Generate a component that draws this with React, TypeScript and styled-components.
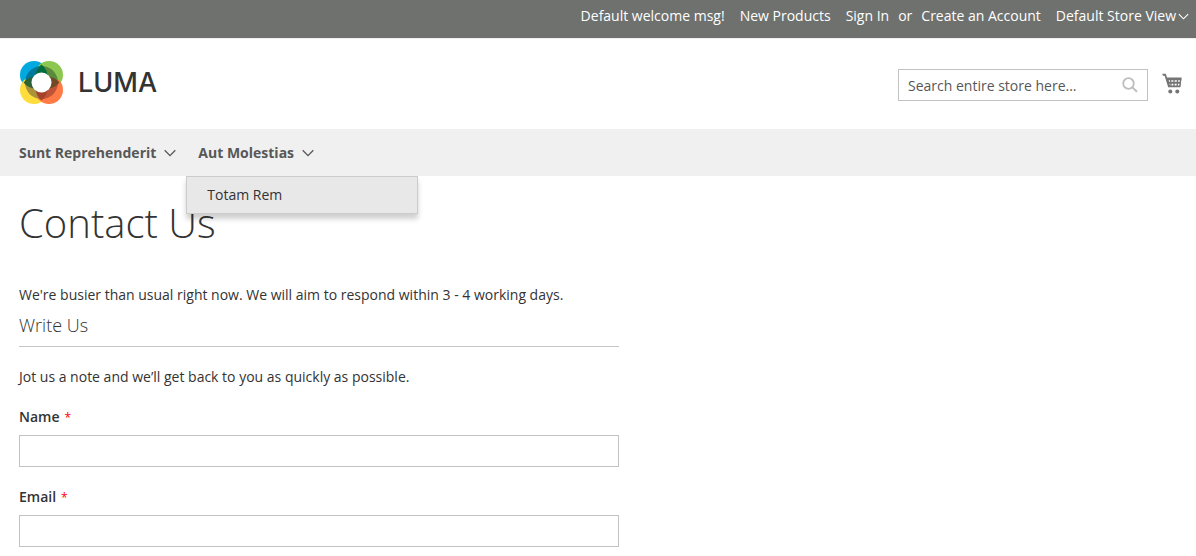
import React from "react";
import styled, { createGlobalStyle } from "styled-components";

const GlobalStyle = createGlobalStyle`
  *, *::before, *::after { box-sizing: border-box; }
  body {
    margin: 0;
    background: #fff;
    color: #333;
    font: 400 14px/20px "Open Sans", "Noto Sans", sans-serif;
  }
`;

const Panel = styled.div`
  display: flex;
  justify-content: flex-end;
  gap: 15px;
  padding: 6px 7px 12px 19px;
  background: #6e716e;
  border-bottom: 1px solid #efefef;
  color: #fff;
`;

const PanelLink = styled.a`
  color: #fff;
  text-decoration: none;
`;

const Authorization = styled.div`
  display: flex;
  gap: 9px;
`;

const StoreSwitcher = styled.button`
  display: flex;
  align-items: center;
  gap: 2px;
  padding: 0;
  border: 0;
  background: none;
  color: inherit;
  font: inherit;
`;

const Header = styled.header`
  display: flex;
  align-items: center;
  justify-content: space-between;
  padding: 22px 14px 24px 19px;
`;

const Logo = styled.a`
  display: flex;
  align-items: center;
  gap: 14px;
  color: #333;
  font: 500 27px/44px Inter, sans-serif;
  text-decoration: none;
`;

const Tools = styled.div`
  display: flex;
  align-items: center;
  gap: 14px;
  padding-top: 4px;
`;

const SearchForm = styled.form`
  display: flex;
  align-items: center;
  width: 250px;
  height: 32px;
  padding-right: 9px;
  border: 1px solid #c2c2c2;
`;

const SearchInput = styled.input`
  flex: 1;
  min-width: 0;
  height: 30px;
  padding: 0 9px;
  border: 0;
  outline: 0;
  background: none;
  font: inherit;
  &::placeholder { color: #575757; opacity: 1; }
`;

const IconButton = styled.button`
  display: flex;
  padding: 0;
  border: 0;
  background: none;
`;

const Cart = styled.a`
  display: flex;
`;

const Nav = styled.nav`
  background: #f0f0f0;
`;

const Menu = styled.ul`
  display: flex;
  gap: 22px;
  margin: 0;
  padding: 0 19px;
  list-style: none;
`;

const MenuItem = styled.li`
  position: relative;
`;

const MenuLink = styled.a`
  display: flex;
  align-items: center;
  gap: 8px;
  height: 47px;
  color: #575757;
  font-weight: 700;
  text-decoration: none;
`;

const Submenu = styled.ul`
  position: absolute;
  top: 100%;
  left: -12px;
  z-index: 1;
  width: 232px;
  margin: 0;
  padding: 0;
  border: 1px solid #ccc;
  background: #e8e8e8;
  box-shadow: 0 5px 5px rgba(0, 0, 0, 0.19);
  list-style: none;
`;

const SubmenuLink = styled.a`
  display: block;
  padding: 8px 20px;
  color: #333;
  text-decoration: none;
`;

const Main = styled.main`
  padding: 25px 19px 8px;
`;

const Title = styled.h1`
  margin: 0 0 40px;
  font-size: 40px;
  font-weight: 300;
  line-height: 44px;
`;

const Text = styled.p`
  margin: 0 0 20px;
`;

const ContactForm = styled.form`
  max-width: 600px;
`;

const Notice = styled(Text)`
  margin-bottom: 10px;
`;

const FormTitle = styled.h2`
  margin: 0 0 20px;
  padding-bottom: 11px;
  border-bottom: 1px solid #c5c5c5;
  font-size: 18px;
  font-weight: 300;
  line-height: 20px;
`;

const Field = styled.div`
  display: flex;
  flex-direction: column;
  gap: 8px;
  & + & { margin-top: 20px; }
`;

const Label = styled.label`
  font-weight: 600;
`;

const Required = styled.span`
  margin-left: 5px;
  color: #f00;
  font-size: 12px;
  font-weight: 400;
  line-height: 12px;
`;

const TextInput = styled.input`
  width: 100%;
  height: 32px;
  padding: 0 9px;
  border: 1px solid #c2c2c2;
  background: #fff;
  font: inherit;
`;

function Chevron({ width, height }: { width: number; height: number }) {
  return (
    <svg width={width} height={height} viewBox="0 0 12 8" fill="none" stroke="currentColor" strokeWidth="1.3" aria-hidden="true">
      <path d="M.7 1.2 6 6.6l5.3-5.4" />
    </svg>
  );
}

function LogoMark() {
  return (
    <svg width="45" height="44" viewBox="0 0 45 44" aria-hidden="true">
      <defs>
        <clipPath id="ring"><circle cx="22.5" cy="21.5" r="16.5" /></clipPath>
      </defs>
      <circle cx="15" cy="14" r="14" fill="#00a9e0" />
      <circle cx="30" cy="14" r="14" fill="#8cc751" />
      <circle cx="15" cy="29" r="14" fill="#ffdd3c" />
      <circle cx="30" cy="29" r="14" fill="#ff7a45" />
      <g clipPath="url(#ring)">
        <path d="M0 0h22.500v21.500H0z" fill="#00789c" />
        <path d="M22.500 0H45v21.500H22.500z" fill="#5a8a3c" />
        <path d="M0 21.500h22.500V44H0z" fill="#ab933a" />
        <path d="M22.500 21.500H45V44H22.500z" fill="#bd5438" />
      </g>
      <path d="M22.500 3.500q6.500 5 6 14.500h-12q-.5-9.500 6-14.500z" fill="#006c3f" />
      <path d="M40.500 21.500q-5 6.500-14.500 6v-12q9.500-.5 14.500 6z" fill="#6f4a24" />
      <path d="M22.500 39.500q-6.500-5-6-14.500h12q.5 9.500-6 14.500z" fill="#a5432a" />
      <path d="M4.500 21.500q5-6.500 14.500-6v12q-9.500.5-14.500-6z" fill="#2b6236" />
      <circle cx="22.5" cy="21.5" r="10" fill="#fff" />
    </svg>
  );
}

function SearchIcon() {
  return (
    <svg width="16" height="16" viewBox="0 0 16 16" fill="none" stroke="#bebebe" aria-hidden="true">
      <circle cx="6.5" cy="6.5" r="5.3" strokeWidth="1.8" />
      <path d="m10.4 10.4 4.6 4.4" strokeWidth="2" />
    </svg>
  );
}

function CartIcon() {
  return (
    <svg width="20" height="24" viewBox="0 0 20 24" fill="none" aria-hidden="true">
      <path d="M.2.8h3.6l1.2 3.6h14.7l-1.5 9.8H6.2L2.6 2.8H.9z" fill="#757575" />
      <path d="M6.4 8h12M7 11.6h11" stroke="#fff" strokeWidth="1.7" />
      <path d="m8.6 6 .5 8M12 6v8M15.6 6l-.5 8M18.7 6l-1 8M5.6 6l2 8" stroke="#757575" strokeWidth="1.3" />
      <circle cx="8.3" cy="18.4" r="2" fill="#757575" />
      <circle cx="15.3" cy="18.4" r="2" fill="#757575" />
    </svg>
  );
}

export default function App() {
  return (
    <>
      <GlobalStyle />
      <Panel>
        <span>Default welcome msg!</span>
        <PanelLink href="#new">New Products</PanelLink>
        <Authorization>
          <PanelLink href="#login">Sign In</PanelLink>
          <span>or</span>
          <PanelLink href="#create">Create an Account</PanelLink>
        </Authorization>
        <StoreSwitcher type="button">
          Default Store View
          <Chevron width={11} height={7} />
        </StoreSwitcher>
      </Panel>
      <Header>
        <Logo href="#home">
          <LogoMark />
          LUMA
        </Logo>
        <Tools>
          <SearchForm role="search">
            <SearchInput type="text" aria-label="Search" placeholder="Search entire store here..." />
            <IconButton type="submit" aria-label="Search">
              <SearchIcon />
            </IconButton>
          </SearchForm>
          <Cart href="#cart" aria-label="My Cart">
            <CartIcon />
          </Cart>
        </Tools>
      </Header>
      <Nav>
        <Menu>
          <MenuItem>
            <MenuLink href="#sunt">
              Sunt Reprehenderit
              <Chevron width={12} height={8} />
            </MenuLink>
          </MenuItem>
          <MenuItem>
            <MenuLink href="#aut">
              Aut Molestias
              <Chevron width={12} height={8} />
            </MenuLink>
            <Submenu>
              <li>
                <SubmenuLink href="#totam">Totam Rem</SubmenuLink>
              </li>
            </Submenu>
          </MenuItem>
        </Menu>
      </Nav>
      <Main>
        <Title>Contact Us</Title>
        <Notice>We're busier than usual right now. We will aim to respond within 3 - 4 working days.</Notice>
        <ContactForm>
          <FormTitle>Write Us</FormTitle>
          <Text>Jot us a note and we’ll get back to you as quickly as possible.</Text>
          <Field>
            <Label htmlFor="name">
              Name<Required>*</Required>
            </Label>
            <TextInput id="name" type="text" required />
          </Field>
          <Field>
            <Label htmlFor="email">
              Email<Required>*</Required>
            </Label>
            <TextInput id="email" type="email" required />
          </Field>
        </ContactForm>
      </Main>
    </>
  );
}
